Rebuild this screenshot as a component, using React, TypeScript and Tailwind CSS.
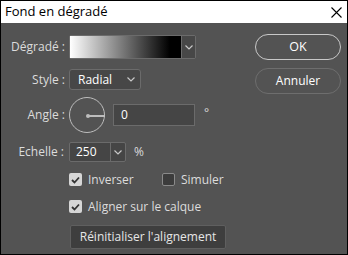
import React from "react";

const font = { fontFamily: '"Open Sans", "Noto Sans", Arial, sans-serif' };

function Chevron({ className = "" }: { className?: string }) {
  return (
    <svg width="8" height="5" viewBox="0 0 8 5" className={className}>
      <path d="M0.5 0.5 L4 4 L7.5 0.5" fill="none" stroke="#c8c8c8" strokeWidth="1.2" />
    </svg>
  );
}

function Check({ checked }: { checked: boolean }) {
  return (
    <div className={`w-[13px] h-[13px] rounded-[2px] flex items-center justify-center ${checked ? "bg-[#d6d6d6]" : "bg-[#3c3c3c] border border-[#8a8a8a]"}`}>
      {checked && (
        <svg width="9" height="8" viewBox="0 0 9 8">
          <path d="M1 4 L3.5 6.5 L8 1.5" fill="none" stroke="#333" strokeWidth="1.8" />
        </svg>
      )}
    </div>
  );
}

export default function App() {
  return (
    <div className="w-[348px] h-[255px] bg-black p-px flex flex-col text-[12px] text-[#dcdcdc]" style={font}>
      <div className="h-[22px] bg-white flex items-center justify-between pl-[4px] pr-[5px] text-black text-[13px]">
        <span>Fond en dégradé</span>
        <svg width="11" height="11" viewBox="0 0 11 11">
          <path d="M0.5 0.5 L10.5 10.5 M10.5 0.5 L0.5 10.5" stroke="#000" strokeWidth="1.1" />
        </svg>
      </div>
      <div className="flex-1 bg-[#535353] flex">
        <div className="flex flex-col pt-[12px]">
          {/* Dégradé */}
          <div className="flex items-center h-[24px]">
            <div className="w-[68px] text-right pr-[4px]">Dégradé :</div>
            <div className="flex h-[24px] border border-[#6b6b6b] rounded-[2px]">
              <div className="w-[111px] h-full bg-[linear-gradient(to_right,#ffffff,#000000_90%)]" />
              <div className="w-[14px] flex items-center justify-center bg-[#474747] border-l border-[#6b6b6b]">
                <Chevron />
              </div>
            </div>
          </div>
          {/* Style */}
          <div className="flex items-center h-[21px] mt-[10px]">
            <div className="w-[68px] text-right pr-[4px]">Style :</div>
            <div className="w-[72px] h-[21px] bg-[#474747] border border-[#6b6b6b] rounded-[3px] flex items-center justify-between pl-[8px] pr-[5px] text-white">
              <span>Radial</span>
              <Chevron />
            </div>
          </div>
          {/* Angle */}
          <div className="flex items-center h-[36px] mt-[7px]">
            <div className="w-[68px] text-right pr-[4px]">Angle :</div>
            <div className="relative w-[36px] h-[36px] rounded-full border border-[#bdbdbd]">
              <div className="absolute left-[16px] top-[16px] w-[4px] h-[4px] rounded-full bg-[#bdbdbd]" />
              <div className="absolute left-[18px] top-[17px] w-[17px] h-[1.5px] bg-[#bdbdbd]" />
            </div>
            <div className="ml-[8px] w-[82px] h-[22px] bg-[#454545] border border-[#6b6b6b] flex items-center pl-[7px] text-white">0</div>
            <span className="ml-[9px] -mt-[4px]">°</span>
          </div>
          {/* Echelle */}
          <div className="flex items-center h-[20px] mt-[9px]">
            <div className="w-[68px] text-right pr-[5px]">Echelle :</div>
            <div className="w-[57px] h-[20px] bg-[#454545] border border-[#6b6b6b] rounded-[2px] flex">
              <div className="flex-1 flex items-center pl-[6px] text-white">250</div>
              <div className="w-[15px] flex items-center justify-center border-l border-[#6b6b6b]">
                <Chevron />
              </div>
            </div>
            <span className="ml-[8px]">%</span>
          </div>
          {/* Checkboxes */}
          <div className="flex items-center mt-[11px] h-[13px] pl-[68px]">
            <Check checked />
            <span className="ml-[6px] w-[74px]">Inverser</span>
            <Check checked={false} />
            <span className="ml-[6px]">Simuler</span>
          </div>
          <div className="flex items-center mt-[14px] h-[13px] pl-[68px]">
            <Check checked />
            <span className="ml-[6px]">Aligner sur le calque</span>
          </div>
          <div className="ml-[69px] mt-[12px] w-[156px] h-[24px] bg-[#3e3e3e] border border-[#5f5f5f] rounded-[2px] flex items-center justify-center text-[#e6e6e6]">
            Réinitialiser l'alignement
          </div>
        </div>
        <div className="ml-auto mr-[6px] pt-[11px] flex flex-col gap-[8px]">
          <div className="w-[86px] h-[26px] rounded-full border border-[#c8c8c8] flex items-center justify-center text-white text-[12.5px]">OK</div>
          <div className="w-[86px] h-[26px] rounded-full border border-[#6e6e6e] flex items-center justify-center text-white">Annuler</div>
        </div>
      </div>
    </div>
  );
}
